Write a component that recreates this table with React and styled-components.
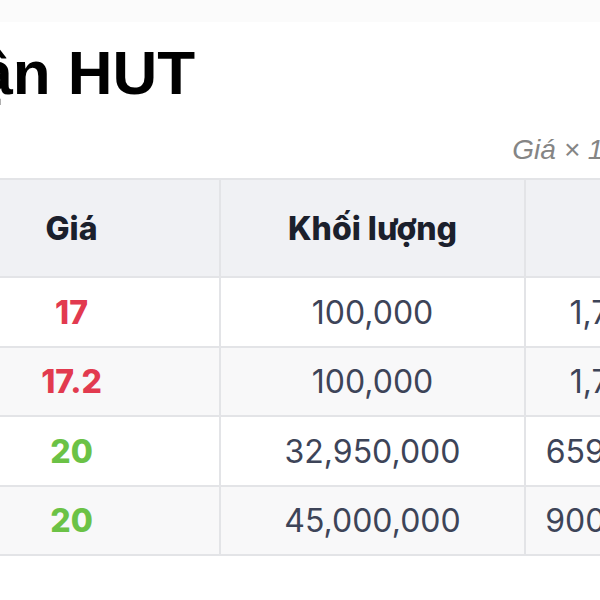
import React from "react";
import styled, { createGlobalStyle } from "styled-components";

const Global = createGlobalStyle`
  html, body {
    margin: 0;
    padding: 0;
    background: #ffffff;
    overflow: hidden;
  }
  body {
    font-family: Inter, "Noto Sans", "DejaVu Sans", sans-serif;
  }
`;

const TopBar = styled.div`
  height: 22px;
  background: #fbfbfb;
`;

const Page = styled.main`
  width: 1307px;
  margin-left: -546px;
  display: flex;
  flex-direction: column;
`;

const Title = styled.h1`
  margin: 15px 0 0 -20px;
  font-family: "Liberation Sans", Arial, sans-serif;
  font-weight: 700;
  font-size: 62px;
  line-height: 1.15;
  color: #000;
  white-space: nowrap;
`;

const Unit = styled.p`
  margin: 26px 44px 0 0;
  align-self: flex-end;
  font-family: "Liberation Sans", Arial, sans-serif;
  font-style: italic;
  font-size: 28px;
  line-height: 1.15;
  color: #858585;
  white-space: nowrap;
`;

const Table = styled.table`
  margin-top: 12px;
  width: 1307px;
  table-layout: fixed;
  border-collapse: separate;
  border-spacing: 0;
  border-top: 2px solid #e3e4e7;
  border-left: 2px solid #e3e4e7;
`;

const Th = styled.th`
  height: 96px;
  padding: 0 12px;
  background: #f0f1f4;
  border-right: 2px solid #e3e4e7;
  border-bottom: 2px solid #e3e4e7;
  font-family: Inter, sans-serif;
  font-weight: 800;
  font-size: 32px;
  color: #1b202c;
  text-align: center;
  white-space: nowrap;
`;

const Row = styled.tr`
  background: ${(p) => (p.$striped ? "#f8f8f9" : "#ffffff")};
`;

const Td = styled.td`
  height: 67.5px;
  padding: 0 12px;
  border-right: 2px solid #e3e4e7;
  border-bottom: 2px solid #e3e4e7;
  font-family: Inter, sans-serif;
  font-size: 32px;
  font-weight: ${(p) => (p.$tone ? 800 : 400)};
  color: ${(p) =>
    p.$tone === "down" ? "#e23a4f" : p.$tone === "up" ? "#6bc246" : "#3d4458"};
  text-align: center;
  white-space: nowrap;
`;

const NextHeading = styled.h2`
  margin: 60px 0 0;
  font-family: "Liberation Sans", Arial, sans-serif;
  font-size: 40px;
  color: #000;
`;

const rows = [
  { date: "05/12/2024", price: "17", tone: "down", volume: "100,000", value: "1,700,000" },
  { date: "04/12/2024", price: "17.2", tone: "down", volume: "100,000", value: "1,720,000" },
  { date: "28/11/2024", price: "20", tone: "up", volume: "32,950,000", value: "659,000,000" },
  { date: "27/11/2024", price: "20", tone: "up", volume: "45,000,000", value: "900,000,000" },
];

export default function App() {
  return (
    <>
      <Global />
      <TopBar />
      <Page>
        <Title>Giao dịch thỏa thuận HUT</Title>
        <Unit>Giá × 1000 VNĐ</Unit>
        <Table>
          <colgroup>
            <col style={{ width: 468 }} />
            <col style={{ width: 297 }} />
            <col style={{ width: 305 }} />
            <col style={{ width: 237 }} />
          </colgroup>
          <thead>
            <tr>
              <Th>Ngày</Th>
              <Th>Giá</Th>
              <Th>Khối lượng</Th>
              <Th>Tổng</Th>
            </tr>
          </thead>
          <tbody>
            {rows.map((r, i) => (
              <Row key={i} $striped={i % 2 === 1}>
                <Td>{r.date}</Td>
                <Td $tone={r.tone}>{r.price}</Td>
                <Td>{r.volume}</Td>
                <Td>{r.value}</Td>
              </Row>
            ))}
          </tbody>
        </Table>
        <NextHeading>Giao dịch nội bộ</NextHeading>
      </Page>
    </>
  );
}
